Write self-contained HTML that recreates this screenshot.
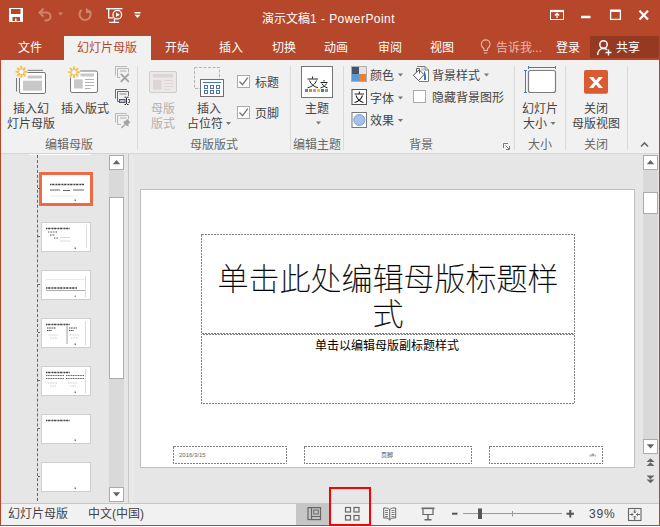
<!DOCTYPE html>
<html lang="zh-CN">
<head>
<meta charset="utf-8">
<title>演示文稿1 - PowerPoint</title>
<style>
html,body{margin:0;padding:0;}
body{width:660px;height:527px;overflow:hidden;position:relative;background:#e6e6e6;
font-family:"Liberation Sans","Noto Sans CJK SC",sans-serif;font-size:12px;color:#444;}
.a{position:absolute;}
.t{position:absolute;white-space:nowrap;line-height:16px;font-size:12px;}
.c{text-align:center;}
.tab{color:#fff;top:40px;}
.lbl{color:#444;}
.grp{color:#666;top:137px;}
.sep{position:absolute;top:66px;width:1px;height:84px;background:#dadada;}
.dis{color:#b0b0b0;}
.th{position:absolute;left:41px;width:48px;height:28px;background:#fff;border:1px solid #cfcfcf;}
.sb{position:absolute;width:13px;height:13px;background:#fff;border:1px solid #ababab;}
.ph{display:none;}
svg{position:absolute;left:0;top:0;}
</style>
</head>
<body>
<div class="a" style="left:0;top:0;width:660px;height:60px;background:#b7472a;"></div>
<div class="t" style="left:262px;top:11px;color:#fff;">演示文稿<span style="letter-spacing:0.45px;">1 - PowerPoint</span></div>
<div class="a" style="left:64px;top:36px;width:87px;height:24px;background:#f1f1f1;"></div>
<div class="t tab" style="left:18px;color:#fff;">文件</div>
<div class="t tab" style="left:77px;color:#b7472a;">幻灯片母版</div>
<div class="t tab" style="left:165px;color:#fff;">开始</div>
<div class="t tab" style="left:219px;color:#fff;">插入</div>
<div class="t tab" style="left:272px;color:#fff;">切换</div>
<div class="t tab" style="left:324px;color:#fff;">动画</div>
<div class="t tab" style="left:378px;color:#fff;">审阅</div>
<div class="t tab" style="left:430px;color:#fff;">视图</div>
<div class="t tab" style="left:496px;color:#eab9ab;">告诉我...</div>
<div class="t tab" style="left:556px;color:#fff;">登录</div>
<div class="a" style="left:590px;top:36px;width:69px;height:22px;background:#953a22;"></div>
<div class="t tab" style="left:616px;">共享</div>
<div class="a" style="left:1px;top:60px;width:658px;height:93px;background:#f1f1f1;"></div>
<div class="a" style="left:1px;top:153px;width:658px;height:1px;background:#d6d6d6;"></div>
<div class="t lbl c" style="left:1px;top:101.5px;width:60px;line-height:15px;">插入幻<br>灯片母版</div>
<div class="t lbl c" style="left:55px;top:101px;width:60px;">插入版式</div>
<div class="t grp c" style="left:39px;top:137px;width:60px;">编辑母版</div>
<div class="sep" style="left:137px;"></div>
<div class="t lbl dis c" style="left:143px;top:101.5px;width:40px;line-height:15px;">母版<br>版式</div>
<div class="t lbl c" style="left:179px;top:101px;width:60px;">插入</div>
<div class="t lbl" style="left:187px;top:116px;">占位符</div>
<div class="t lbl" style="left:255px;top:75px;">标题</div>
<div class="t lbl" style="left:255px;top:106px;">页脚</div>
<div class="t grp c" style="left:184px;top:137px;width:60px;">母版版式</div>
<div class="sep" style="left:290px;"></div>
<div class="t lbl c" style="left:287px;top:101px;width:60px;">主题</div>
<div class="t grp c" style="left:287px;top:137px;width:60px;">编辑主题</div>
<div class="sep" style="left:343px;"></div>
<div class="t lbl" style="left:370px;top:68px;">颜色</div>
<div class="t lbl" style="left:370px;top:91px;">字体</div>
<div class="t lbl" style="left:370px;top:113px;">效果</div>
<div class="t lbl" style="left:432px;top:68px;">背景样式</div>
<div class="t lbl" style="left:432px;top:90px;">隐藏背景图形</div>
<div class="t grp c" style="left:391px;top:137px;width:60px;">背景</div>
<div class="sep" style="left:514px;"></div>
<div class="t lbl c" style="left:510px;top:101px;width:60px;">幻灯片</div>
<div class="t lbl" style="left:523px;top:116px;">大小</div>
<div class="t grp c" style="left:510px;top:137px;width:60px;">大小</div>
<div class="sep" style="left:565px;"></div>
<div class="t lbl c" style="left:566px;top:101.5px;width:60px;line-height:15px;">关闭<br>母版视图</div>
<div class="t grp c" style="left:566px;top:137px;width:60px;">关闭</div>
<div class="sep" style="left:627px;"></div>
<div class="a" style="left:237px;top:75px;width:11px;height:11px;background:#fff;border:1px solid #ababab;"></div>
<div class="a" style="left:237px;top:106px;width:11px;height:11px;background:#fff;border:1px solid #ababab;"></div>
<div class="a" style="left:413px;top:90px;width:11px;height:11px;background:#fff;border:1px solid #ababab;"></div>
<div class="a" style="left:0;top:60px;width:1px;height:466px;background:#b7472a;"></div>
<div class="a" style="left:659px;top:60px;width:1px;height:466px;background:#b7472a;"></div>
<div class="a" style="left:29px;top:154px;width:62px;height:1px;background:#fafafa;"></div>
<div class="a" style="left:37px;top:155px;width:0;height:346px;border-left:1px dashed #666;"></div>
<div class="a" style="left:39px;top:172px;width:48px;height:28px;background:#fff;border:3px solid #ec6a45;"></div>
<div class="th" style="top:222px;"></div>
<div class="th" style="top:270px;"></div>
<div class="th" style="top:318px;"></div>
<div class="th" style="top:366px;"></div>
<div class="th" style="top:414px;"></div>
<div class="th" style="top:462px;"></div>
<div class="a" style="left:38px;top:188px;width:2px;height:1px;background:#666;"></div>
<div class="a" style="left:38px;top:236px;width:2px;height:1px;background:#666;"></div>
<div class="a" style="left:38px;top:284px;width:2px;height:1px;background:#666;"></div>
<div class="a" style="left:38px;top:332px;width:2px;height:1px;background:#666;"></div>
<div class="a" style="left:38px;top:380px;width:2px;height:1px;background:#666;"></div>
<div class="a" style="left:38px;top:428px;width:2px;height:1px;background:#666;"></div>
<div class="a" style="left:38px;top:476px;width:2px;height:1px;background:#666;"></div>
<div class="a" style="left:109px;top:155px;width:15px;height:347px;background:#d9d9d9;"></div>
<div class="sb" style="left:109px;top:155px;"></div>
<div class="sb" style="left:109px;top:487px;"></div>
<div class="a" style="left:109px;top:197px;width:13px;height:180px;background:#fff;border:1px solid #ababab;"></div>
<div class="a" style="left:128px;top:154px;width:1px;height:349px;background:#c8c8c8;"></div>
<div class="a" style="left:129px;top:154px;width:5px;height:349px;background:#e9e9e9;"></div>
<div class="a" style="left:643px;top:155px;width:15px;height:299px;background:#d9d9d9;"></div>
<div class="sb" style="left:643px;top:155px;"></div>
<div class="sb" style="left:643px;top:439px;"></div>
<div class="a" style="left:643px;top:192px;width:13px;height:20px;background:#fff;border:1px solid #ababab;"></div>
<div class="a" style="left:140px;top:189px;width:495px;height:279px;background:#fff;border:1px solid #bfbfbf;box-sizing:border-box;"></div>
<div class="t c" style="left:201px;top:262px;width:374px;font-size:31px;line-height:35px;font-weight:100;color:#000;-webkit-text-stroke:0.3px #000;">单击此处编辑母版标题样<br>式</div>
<div class="t c" style="left:200px;top:339px;width:374px;font-size:12px;line-height:14px;color:#000;">单击以编辑母版副标题样式</div>
<div class="t" style="left:179px;top:451px;font-size:6px;line-height:8px;color:#666;">2016/3/15</div>
<div class="t" style="left:381px;top:451px;font-size:6px;line-height:8px;color:#555;">页脚</div>
<div class="t" style="left:589px;top:451px;font-size:6px;line-height:8px;color:#777;">‹#›</div>
<div class="a" style="left:1px;top:503px;width:658px;height:22px;background:#f1f1f1;border-top:1px solid #c6c6c6;box-sizing:border-box;"></div>
<div class="a" style="left:296px;top:504px;width:33px;height:21px;background:#c6c6c6;"></div>
<div class="a" style="left:0;top:525px;width:660px;height:1px;background:#b7472a;"></div>
<div class="a" style="left:0;top:526px;width:660px;height:1px;background:#fff;"></div>
<div class="t lbl" style="left:8px;top:506px;">幻灯片母版</div>
<div class="t lbl" style="left:88px;top:506px;">中文(中国)</div>
<div class="t lbl" style="left:589px;top:506px;letter-spacing:0.8px;">39%</div>
<div class="a" style="left:329px;top:487px;width:38px;height:35px;border:2px solid #f00;"></div>
<svg width="660" height="527" viewBox="0 0 660 527">
<!-- QAT -->
<g fill="#fff">
<path d="M9 8h14v14h-14z M11 9v5h9.5v-5z M12.500 17v4h2.500v-2.500h1.500v2.500h3.500v-4z" fill-rule="evenodd"/>
<path d="M134.500 12h6v1.500h-6z M134.500 14.700h6l-3 3.200z"/>
</g>
<g fill="none" stroke="#d2836d" stroke-width="2">
<path d="M40 12.500h6.500a4 4 0 0 1 0 8h-2"/>
<path d="M43.500 8.500l-4 4 4 4" />
<path d="M89 10.300a5.600 5.600 0 1 1 -7.300 -0.400"/>
</g>
<path d="M58 12.500h5l-2.500 3z" fill="#d2836d"/>
<path d="M86 7.500v5.500h5.500z" fill="#d2836d"/>
<g fill="none" stroke="#fff" stroke-width="1.300">
<path d="M106 8.700h16.500"/>
<path d="M108.700 9v8.800h4.500"/>
<circle cx="117.300" cy="14.700" r="4.300"/>
<path d="M114.500 19v3 M109 22.300h10"/>
</g>
<path d="M116 12.300v4.800l3.800-2.400z" fill="#fff"/>
<!-- window controls -->
<g fill="none" stroke="#fff">
<rect x="550.500" y="10.500" width="13" height="9" stroke-width="1"/>
<path d="M550 11h14" stroke-width="2.200"/>
<path d="M557 18v-4.500 M554.800 15.500l2.200-2.200 2.200 2.200" stroke-width="1.200"/>
<path d="M581 17h9.500" stroke-width="2.500"/>
<rect x="610.600" y="10.600" width="9.800" height="8.800" stroke-width="1.300"/>
<path d="M610 10.700h10.500" stroke-width="2.400"/>
<path d="M639.500 10.800l8.500 8.700 M648 10.800l-8.500 8.700" stroke-width="2.200"/>
</g>
<!-- lightbulb -->
<g fill="none" stroke="#eab9ab" stroke-width="1.100">
<path d="M484 50.500v-1.700c-2.200-1.500-2.700-3.200-2.700-4.500a4.400 4.400 0 0 1 8.800 0c0 1.300-.5 3-2.700 4.500v1.700z"/>
<path d="M484 53h3.400"/>
</g>
<!-- share person -->
<g fill="none" stroke="#fff" stroke-width="1.500">
<circle cx="603.500" cy="44.500" r="3.700"/>
<path d="M597.700 55c0-4 2.500-6.500 5.800-6.500 1.500 0 2.800 .5 3.700 1.300"/>
<path d="M608.500 49.500v6 M605.500 52.500h6" stroke-width="1.400"/>
</g>

<!-- insert slide master icon -->
<g>
<path d="M27.500 70.300h15.500 M16.500 78v13.500" stroke="#777" fill="none"/>
<rect x="19.500" y="72.500" width="26" height="21" rx="1.500" fill="#fff" stroke="#777"/>
<rect x="27.500" y="75.500" width="14.500" height="3" fill="#c8c8c8"/>
<rect x="23" y="80.700" width="19" height="10" fill="#c8c8c8"/>
<circle cx="21.3" cy="71.8" r="6.3" fill="#f6f3ee"/>
<path d="M23.50 71.80L27.10 71.80 M22.86 73.36L25.40 75.90 M21.30 74.00L21.30 77.60 M19.74 73.36L17.20 75.90 M19.10 71.80L15.50 71.80 M19.74 70.24L17.20 67.70 M21.30 69.60L21.30 66.00 M22.86 70.24L25.40 67.70" stroke="#f0c257" stroke-width="2.1" fill="none"/>
<circle cx="21.3" cy="71.8" r="1.7" fill="#fff"/>
</g>
<!-- insert layout icon -->
<g>
<rect x="70.500" y="71" width="27" height="21.500" rx="1.500" fill="#fff" stroke="#777"/>
<rect x="80.500" y="73.500" width="13.500" height="3" fill="#c8c8c8"/>
<rect x="74" y="79.300" width="8.700" height="9.200" fill="#c8c8c8"/>
<path d="M85 79.500h9 M85 82.500h9 M85 85.500h9 M85 88.500h5.500" stroke="#b0b0b0" fill="none"/>
<circle cx="74" cy="72.2" r="6.3" fill="#f6f3ee"/>
<path d="M76.20 72.20L79.80 72.20 M75.56 73.76L78.10 76.30 M74.00 74.40L74.00 78.00 M72.44 73.76L69.90 76.30 M71.80 72.20L68.20 72.20 M72.44 70.64L69.90 68.10 M74.00 70.00L74.00 66.40 M75.56 70.64L78.10 68.10" stroke="#f0c257" stroke-width="2.1" fill="none"/>
<circle cx="74" cy="72.2" r="1.7" fill="#fff"/>
</g>
<!-- small icons: delete, rename, preserve -->
<g fill="none" stroke="#b8b8b8">
<path d="M115.500 75.500v-9h11.500"/>
<path d="M120 77.500h-2.500v-9h11v4"/>
<path d="M120 71h6.500" stroke="#c4c4c4" stroke-width="1.500"/>
<path d="M120.800 73.800l8 8 M128.800 73.800l-8 8" stroke="#a4a4a4" stroke-width="1.900"/>
</g>
<g fill="none" stroke="#6c6c6c">
<path d="M115.500 98.500v-9h11.500"/>
<path d="M119 101.500h-1.500v-10h11v4.500"/>
<path d="M119.500 94h7" stroke="#aaa" stroke-width="1.500"/>
<rect x="119.500" y="99.500" width="5.500" height="3" fill="#a8c0e6" stroke="#5a5a5a"/>
<path d="M128 99.500h1.500v3h-1.500" stroke="#5a5a5a"/>
<path d="M126.500 97.500v6.500 M124.500 97.200h1.600 M127 97.200h1.600 M124.500 104.500h1.600 M127 104.500h1.600" stroke="#333"/>
</g>
<g fill="none" stroke="#b8b8b8">
<path d="M115.500 122.500v-9h11.500"/>
<path d="M121 124.500h-3.500v-9h11v4"/>
<path d="M120 118h6.500" stroke="#c4c4c4" stroke-width="1.500"/>
<path d="M121.500 128l3.500-3.500" stroke="#a4a4a4" stroke-width="1.300"/>
<path d="M123.800 121.300l4.700 4.700 M127.300 120l-2.800 3 2 2 3-2.800z" stroke="#a4a4a4" stroke-width="1.300" fill="#a4a4a4"/>
</g>

<!-- master layout (disabled) -->
<g>
<rect x="149.500" y="71.500" width="27" height="21" rx="1.500" fill="#ece8e8" stroke="#cdcdcd"/>
<rect x="153" y="74" width="20" height="3.500" fill="#dcd6d6"/>
<rect x="153" y="80" width="8.500" height="9.500" fill="#dcd6d6"/>
<path d="M164 80.500h9 M164 83.500h9 M164 86.500h9 M164 89.500h6" stroke="#dcd6d6" fill="none"/>
</g>
<!-- insert placeholder -->
<g>
<rect x="194.500" y="67.500" width="25" height="21" fill="none" stroke="#b4b4b4" stroke-dasharray="3 1.500"/>
<rect x="200.500" y="79.500" width="23" height="17" fill="#fff" stroke="#707070"/>
<path d="M203 82.500h18" stroke="#4a72b0" fill="none"/>
<g fill="#fff" stroke="#4a72b0" stroke-width="1">
<rect x="204.500" y="85.500" width="3" height="3"/><rect x="210.500" y="85.500" width="3" height="3"/><rect x="216.500" y="85.500" width="3" height="3"/>
<rect x="204.500" y="90.500" width="3" height="3"/><rect x="210.500" y="90.500" width="3" height="3"/><rect x="216.500" y="90.500" width="3" height="3"/>
</g>
<path d="M226 122h5l-2.500 3z" fill="#777"/>
</g>
<!-- checks -->
<g fill="none" stroke="#767676" stroke-width="1.300">
<path d="M239.500 81.500l3 3.200 5.300-7"/>
<path d="M239.500 112.500l3 3.200 5.300-7"/>
</g>
<!-- theme -->
<g>
<rect x="301.500" y="66.500" width="31" height="31" fill="#fff" stroke="#757575"/>
<g fill="none" stroke="#222" stroke-width="1">
<path d="M312.500 76.500v2 M307.500 79h10.500 M309.500 80.500c1.500 3.700 4 6 8.500 7.300 M316.500 80.500c-1.500 3.700-4 6-9 7.300"/>
<path d="M324 80v1.500 M320.500 82.500h7 M322 83.500c1 2.300 2.800 3.600 5.500 4.400 M326.500 83.500c-1 2.300-2.800 3.600-6 4.400"/>
</g>
<rect x="305" y="89" width="3" height="3" fill="#4a86d8"/>
<rect x="309" y="89" width="3" height="3" fill="#ed7d31"/>
<rect x="313" y="89" width="3" height="3" fill="#a5a5a5"/>
<rect x="317" y="89" width="3" height="3" fill="#ffc000"/>
<rect x="321" y="89" width="3" height="3" fill="#4472c4"/>
<rect x="325" y="89" width="3" height="3" fill="#70ad47"/>
<path d="M316 121.500h5l-2.500 3z" fill="#777"/>
</g>
<!-- colors / fonts / effects -->
<g>
<rect x="351.500" y="66.500" width="15" height="15" fill="#fff" stroke="#b0b0b0"/>
<rect x="352" y="67" width="7" height="7" fill="#44546a"/>
<rect x="359" y="67" width="7" height="7" fill="#e2e2e2"/>
<rect x="352" y="74" width="7" height="7" fill="#5b9bd5"/>
<rect x="359" y="74" width="7" height="7" fill="#ed7d31"/>
<path d="M398 73.500h5l-2.500 3z M398 96.500h5l-2.500 3z M398 119h5l-2.500 3z M484 73.500h5l-2.500 3z M550.500 122h5l-2.500 3z" fill="#777"/>
<rect x="352" y="89.500" width="14.500" height="15" fill="#fff" stroke="#555"/>
<g fill="none" stroke="#222" stroke-width="1.100">
<path d="M359.300 91.500v2 M354.500 94h9.500 M356 95.500c1.200 3.500 3.500 5.800 7.500 7 M362.500 95.500c-1.200 3.500-3.500 5.800-8 7"/>
</g>
<rect x="352" y="112.500" width="14.500" height="15" fill="#fff" stroke="#777"/>
<circle cx="359.300" cy="120" r="5.500" fill="#a6c0e8" stroke="#7d9fd3"/>
</g>
<!-- background styles icon -->
<g>
<path d="M417 66.500h8l3.500 3.500v11.500h-9.500" fill="#fff" stroke="#7a7a7a"/>
<path d="M425 66.500v3.500h3.500" fill="none" stroke="#7a7a7a"/>
<rect x="421" y="67.500" width="3" height="3.500" fill="#c3d3ea"/>
<path d="M424 70.500c1.800 2 2.300 5.500 2 9.500h-2z" fill="#3a75c4"/>
<path d="M413.300 75.200l5.900-5.400 4.800 4.800-5.400 6z" fill="#fff" stroke="#5a5a5a"/>
<path d="M416.500 72.500v-4h3v5" fill="none" stroke="#5a5a5a"/>
</g>
<!-- dialog launcher -->
<g fill="none" stroke="#777">
<path d="M503.500 148v-4.500h4.500"/>
<path d="M505.500 145.500l3.500 3.500 M509.500 146v3.500h-3.500"/>
</g>
<!-- slide size -->
<g>
<rect x="528.500" y="70.500" width="27" height="22" rx="2" fill="#fff" stroke="#7c7c7c" stroke-width="1.200"/>
<path d="M528 67.500h28 M528.500 66v3 M555.500 66v3 M525.500 70v23 M524 70.500h3 M524 92.500h3" fill="none" stroke="#4a7ebb"/>
</g>
<!-- close master -->
<g>
<rect x="584" y="70" width="24" height="23.700" rx="2" fill="#d95b34"/>
<path d="M589 77h4.300l2.700 3.600 2.700-3.600h4.300l-4.800 5.500 4.800 5.500h-4.300l-2.700-3.600-2.700 3.600h-4.300l4.800-5.500z" fill="#fff"/>
</g>
<path d="M641 146.500l3.500-3.500 3.500 3.500" fill="none" stroke="#666" stroke-width="1.600"/>

<!-- placeholders -->
<g fill="none" stroke="#808080" stroke-width="1" stroke-dasharray="2 1" shape-rendering="crispEdges">
<rect x="201.500" y="234.500" width="373" height="99"/>
<rect x="201.500" y="334.500" width="373" height="69" stroke-dashoffset="1.500"/>
<rect x="173.500" y="446.500" width="113" height="17"/>
<rect x="304.500" y="446.500" width="167" height="17"/>
<rect x="489.500" y="446.500" width="113" height="17"/>
</g>
<!-- scroll arrows -->
<g fill="#666">
<path d="M112.800 164.200h7.400l-3.700-4.200z"/>
<path d="M112.800 492.300h7.400l-3.700 4.200z"/>
<path d="M646.800 164.200h7.400l-3.700-4.200z"/>
<path d="M646.800 444.300h7.400l-3.700 4.200z"/>
<path d="M646.500 462h8l-4-3.800z M646.500 466h8l-4-3.800z"/>
<path d="M646.500 475.500h8l-4 3.800z M646.500 479.500h8l-4 3.800z"/>
</g>

<!-- thumbnails content -->
<g stroke="#444" fill="none">
<path d="M50 184.500h34" stroke-width="1.600" stroke-dasharray="1.500 .6 2 .5 1 .4"/>
<path d="M50 190h10 M63 190.500h7 M73 190h11" stroke="#555" stroke-width=".9"/>
<path d="M50 196h28" stroke="#ddd" stroke-width=".6"/>
<path d="M46 228.500h24" stroke-width="1.400" stroke-dasharray="1.500 .6 2 .5 1 .4"/>
<path d="M48 232h9 M50 235h5 M54 238h4" stroke="#555" stroke-width="1" stroke-dasharray="1 .6"/>
<path d="M60 237.500h10 M60 241h10" stroke="#d8d8e4" stroke-width="1.200"/>
<path d="M86.500 225v23" stroke="#ccc" stroke-width=".7"/>
<path d="M46 288h31" stroke-width="1.400" stroke-dasharray="1.500 .6 2 .5 1 .4"/>
<path d="M46 290.500h39" stroke="#888" stroke-width=".7"/>
<path d="M46 279.500h39" stroke="#ddd" stroke-width=".6"/>
<path d="M85.500 276v21" stroke="#ccc" stroke-width=".7"/>
<path d="M46 324.500h24" stroke-width="1.400" stroke-dasharray="1.500 .6 2 .5 1 .4"/>
<path d="M47 328h9 M69 328h8 M47 330.500h5 M69 330.500h5" stroke="#444" stroke-width="1" stroke-dasharray="1.200 .5"/>
<path d="M49 335h9 M70 335h9 M50 338h7 M71 338h7" stroke="#bbb" stroke-width=".8" stroke-dasharray="1 .6"/>
<path d="M67 326v18" stroke="#888" stroke-width=".8"/>
<path d="M85.500 321v24 M85.500 369v24" stroke="#ccc" stroke-width=".7"/>
<path d="M46 372.500h24" stroke-width="1.400" stroke-dasharray="1.500 .6 2 .5 1 .4"/>
<path d="M46 375.500h18 M66 375.500h18 M46 378.500h18 M66 378.500h18" stroke="#555" stroke-width=".9" stroke-dasharray="1.200 .5"/>
<path d="M48 383h9 M68 383h9 M50 386h6 M70 386h6" stroke="#bbb" stroke-width=".8" stroke-dasharray="1 .6"/>
<path d="M46 420.500h24" stroke-width="1.400" stroke-dasharray="1.500 .6 2 .5 1 .4"/>
</g>
<g fill="#777">
<rect x="74.500" y="199.500" width="1.500" height="1.500"/><rect x="74.500" y="247.500" width="1.500" height="1.500"/><rect x="74.500" y="295.500" width="1.500" height="1.500" fill="#999"/>
<rect x="74.500" y="343.500" width="1.500" height="1.500"/><rect x="74.500" y="391.500" width="1.500" height="1.500"/><rect x="74.500" y="439.500" width="1.500" height="1.500"/><rect x="74.500" y="487.500" width="1.500" height="1.500"/>
</g>

<!-- status bar icons -->
<g fill="none" stroke="#666" stroke-width="1.200">
<rect x="308" y="507.600" width="12.500" height="12"/>
<path d="M311.500 507.500v12 M311.500 516.500h9"/>
<rect x="313.700" y="510" width="4.500" height="4" stroke-width="1"/>
<rect x="345.500" y="507.500" width="5" height="4.500"/><rect x="354" y="507.500" width="5" height="4.500"/>
<rect x="345.500" y="515.500" width="5" height="4.500"/><rect x="354" y="515.500" width="5" height="4.500"/>
</g>
<g fill="none" stroke="#666" stroke-width="1">
<path d="M389.700 509.500v11 M389.700 509.500c-2-1.500-4-1.800-6-1.500v10c2-.3 4 0 6 1.500c2-1.500 4-1.800 6-1.500v-10c-2-.3-4 0-6 1.500"/>
<path d="M385 510.500h3 M385 512.500h3 M385 514.500h3 M385 516.500h3 M391.500 510.500h3 M391.500 512.500h3 M391.500 514.500h3 M391.500 516.500h3" stroke-width=".8"/>
<path d="M421.500 508.300h13" stroke-width="1.600"/>
<path d="M423 509v5.500h10v-5.500" stroke-width="1.200"/>
<path d="M428 514.500v5 M424.500 519.800h7" stroke-width="1.400"/>
</g>
<g fill="none" stroke="#555">
<path d="M452 513.700h5.500" stroke-width="2"/>
<path d="M463 513.500h99" stroke="#999" stroke-width="1"/>
<path d="M512.500 511v5.500" stroke="#999"/>
<path d="M566.500 513.700h7.500 M570.300 510v7.500" stroke-width="2"/>
</g>
<rect x="478" y="508.500" width="4" height="10.500" fill="#555"/>
<g fill="none" stroke="#666" stroke-width="1.100">
<rect x="628.500" y="508.500" width="12.500" height="12"/>
<path d="M634.700 509.500v3.500 M634.700 516.500v3.500 M629.500 514.500h3.500 M636.500 514.500h3.500"/>
<path d="M633.300 511.500l1.400 1.500 1.400-1.500 M633.300 517.500l1.400-1.500 1.400 1.500 M631.500 513l1.500 1.500-1.500 1.500 M638 513l-1.500 1.500 1.500 1.500" stroke-width=".9"/>
</g>
</svg>

</body>
</html>
